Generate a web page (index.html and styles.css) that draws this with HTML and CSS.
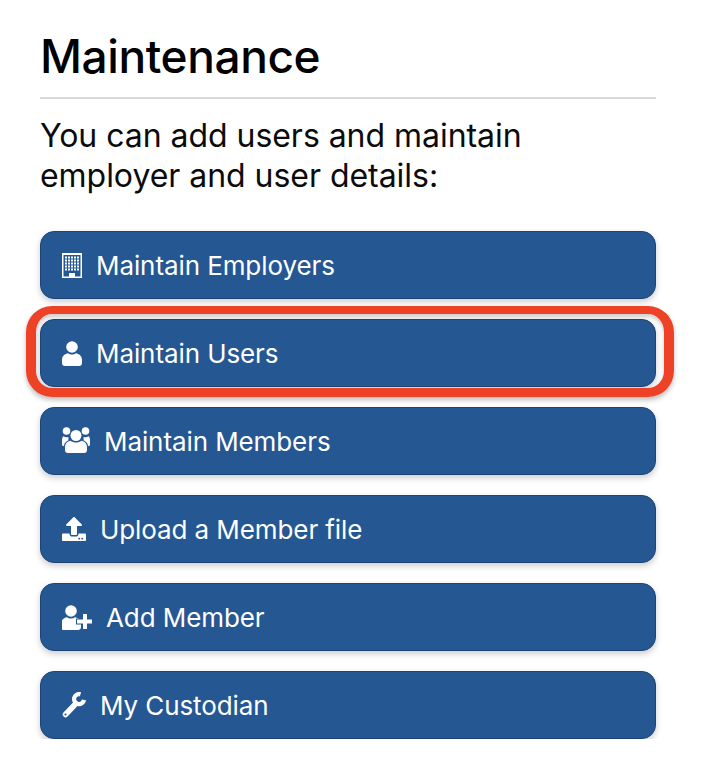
FILE: index.html
```html
<!DOCTYPE html>
<html lang="en">
<head>
<meta charset="utf-8">
<title>Maintenance</title>
<link rel="stylesheet" href="styles.css">
</head>
<body>
<main class="page">
  <h1 class="title">Maintenance</h1>
  <p class="intro">You can add users and maintain employer and user details:</p>
  <nav class="actions">
    <a class="btn" href="#">
      <svg class="icon" viewBox="0 0 20 25" width="20" height="25" aria-hidden="true"><path fill="#fff" fill-rule="evenodd" d="M0 0h20v25H0zM1.500 2v21.500h17V2z"/><path fill="#fff" d="M7 20h6v4H7zM3 3.500h2v2H3zM6 3.500h2v2H6zM9 3.500h2v2H9zM12 3.500h2v2h-2zM15 3.500h2v2h-2zM3 6.500h2v2H3zM6 6.500h2v2H6zM9 6.500h2v2H9zM12 6.500h2v2h-2zM15 6.500h2v2h-2zM3 9.500h2v2H3zM6 9.500h2v2H6zM9 9.500h2v2H9zM12 9.500h2v2h-2zM15 9.500h2v2h-2zM3 12.500h2v2H3zM6 12.500h2v2H6zM9 12.500h2v2H9zM12 12.500h2v2h-2zM15 12.500h2v2h-2zM3 15.500h2v2H3zM6 15.500h2v2H6zM9 15.500h2v2H9zM12 15.500h2v2h-2zM15 15.500h2v2h-2z"/></svg>
      <span>Maintain Employers</span>
    </a>
    <div class="highlighted">
      <a class="btn" href="#">
        <svg class="icon" viewBox="0 0 20 25" width="20" height="25" aria-hidden="true"><circle cx="10" cy="6" r="5.800" fill="#fff"/><path fill="#fff" d="M3 25h14a3 3 0 0 0 3-3v-3c0-4-3-6.500-6-6.800-1.200.9-2.500 1.300-4 1.300s-2.800-.4-4-1.300c-3 .3-6 2.800-6 6.800v3a3 3 0 0 0 3 3z"/></svg>
        <span>Maintain Users</span>
      </a>
      <div class="ring"></div>
    </div>
    <a class="btn" href="#">
      <svg class="icon icon-raised" viewBox="0 0 28 26" width="28" height="26" aria-hidden="true"><g fill="#fff"><circle cx="4.500" cy="4" r="3.800"/><circle cx="23.500" cy="4" r="3.800"/><circle cx="14" cy="8.500" r="5.500"/><path d="M6 26h16a3 3 0 0 0 3-3v-3c0-3.500-2.500-5.800-5.500-6.300-1.500 1.200-3.500 1.800-5.500 1.800s-4-.6-5.500-1.800C5.500 14.200 3 16.500 3 20v3a3 3 0 0 0 3 3z"/><path d="M1.500 9.200c1 .6 2 1 3 1h2.200c-.4 1-.5 2-.2 3-2.500 1-4.300 3-4.600 5.800H1.500A1.500 1.500 0 0 1 0 17.500v-4.800c0-1.500.5-3 1.500-3.500z"/><path d="M26.500 9.200c-1 .6-2 1-3 1h-2.200c.4 1 .5 2 .2 3 2.500 1 4.300 3 4.600 5.800h.4a1.500 1.500 0 0 0 1.500-1.500v-4.800c0-1.500-.5-3-1.500-3.500z"/></g></svg>
      <span>Maintain Members</span>
    </a>
    <a class="btn" href="#">
      <svg class="icon" viewBox="0 0 512 512" width="24" height="24" aria-hidden="true"><path fill="#fff" d="M296 384h-80c-13.300 0-24-10.700-24-24V192h-87.700c-17.800 0-26.700-21.500-14.100-34.100L242.300 5.700c7.500-7.500 19.800-7.500 27.300 0l152.200 152.200c12.600 12.600 3.700 34.100-14.100 34.100H320v168c0 13.300-10.700 24-24 24zm216-8v112c0 13.300-10.700 24-24 24H24c-13.300 0-24-10.700-24-24V376c0-13.300 10.700-24 24-24h136v8c0 30.900 25.100 56 56 56h80c30.900 0 56-25.100 56-56v-8h136c13.300 0 24 10.700 24 24zm-124 88c0-11-9-20-20-20s-20 9-20 20 9 20 20 20 20-9 20-20zm64 0c0-11-9-20-20-20s-20 9-20 20 9 20 20 20 20-9 20-20z"/></svg>
      <span>Upload a Member file</span>
    </a>
    <a class="btn" href="#">
      <svg class="icon" viewBox="0 0 30 25" width="30" height="25" aria-hidden="true"><circle cx="9" cy="6" r="5.800" fill="#fff"/><path fill="#fff" d="M3 25h14a3 3 0 0 0 3-3v-3c0-4-3-6.500-6-6.800-1.200.9-2.500 1.300-4 1.300s-2.800-.4-4-1.300c-3 .3-6 2.800-6 6.800v3a3 3 0 0 0 3 3z" transform="translate(-1 0)"/><path class="plus" d="M21 9h4v5.500h5v4h-5V24h-4v-5.500h-6v-4h6z"/></svg>
      <span>Add Member</span>
    </a>
    <a class="btn" href="#">
      <svg class="icon" viewBox="0 0 24 26" width="24" height="26" aria-hidden="true"><path d="M3.500 22.500 13.500 12" fill="none" stroke="#fff" stroke-width="5.600" stroke-linecap="round"/><path d="M18.500 2.300A5 5 0 1 0 22 8" fill="none" stroke="#fff" stroke-width="4.200"/><circle cx="3.500" cy="22.500" r="1.100" fill="#255793"/></svg>
      <span>My Custodian</span>
    </a>
  </nav>
</main>
</body>
</html>
```
FILE: styles.css
```css
html, body {
  margin: 0;
  padding: 0;
  background: #fff;
}
body {
  font-family: Inter, "Liberation Sans", sans-serif;
  color: #0b0b0b;
}
.page {
  width: 616px;
  padding: 28px 50px 0 40px;
}
.title {
  margin: 0;
  padding-bottom: 13px;
  border-bottom: 2px solid #d9d9d9;
  font-size: 46px;
  line-height: 56px;
  font-weight: 500;
  letter-spacing: -0.4px;
  color: #000;
}
.intro {
  margin: 17px 0 0;
  font-size: 32px;
  line-height: 40px;
  font-weight: 400;
  letter-spacing: -0.04px;
}
.actions {
  display: flex;
  flex-direction: column;
  gap: 20px;
  margin-top: 35px;
}
.btn {
  display: flex;
  align-items: center;
  gap: 14px;
  box-sizing: border-box;
  height: 68px;
  padding: 0 20px 0 21px;
  border: 1px solid #1c4475;
  border-radius: 14px;
  background: #255793;
  box-shadow: 0 3px 6px rgba(0, 0, 0, 0.2);
  color: #fff;
  font-size: 26px;
  letter-spacing: -0.09px;
  text-decoration: none;
}
.icon {
  flex: none;
  display: block;
}
.icon-raised {
  margin-top: -2px;
}
.plus {
  fill: #fff;
  stroke: #255793;
  stroke-width: 2;
  paint-order: stroke;
}
.highlighted {
  position: relative;
}
.ring {
  position: absolute;
  inset: -13px -18px -10px -14px;
  box-sizing: border-box;
  border-style: solid;
  border-color: #ee4226;
  border-width: 8px 10px 9px 10px;
  border-radius: 26px;
  box-shadow: 0 3px 5px rgba(0, 0, 0, 0.25), inset 0 3px 4px rgba(0, 0, 0, 0.2);
  pointer-events: none;
}
```
